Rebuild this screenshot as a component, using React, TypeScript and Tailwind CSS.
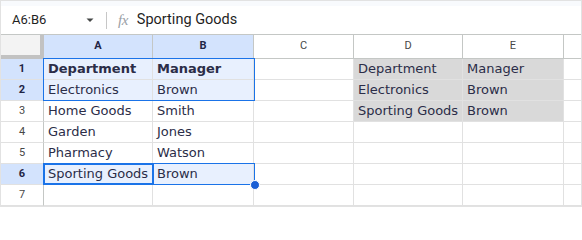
import React from "react";

// ── Data ──────────────────────────────────────────────────────────────────────

type Row = { a: string; b: string; d?: string; e?: string; bold?: boolean };

const rows: Row[] = [
  { a: "Department", b: "Manager", d: "Department", e: "Manager", bold: true },
  { a: "Electronics", b: "Brown", d: "Electronics", e: "Brown" },
  { a: "Home Goods", b: "Smith", d: "Sporting Goods", e: "Brown" },
  { a: "Garden", b: "Jones" },
  { a: "Pharmacy", b: "Watson" },
  { a: "Sporting Goods", b: "Brown" },
  { a: "", b: "" },
];

const selectedRows = [1, 2, 6];
const rangeRows = [1, 2, 6];

const cellFont = { fontFamily: '"DejaVu Sans", Verdana, sans-serif' };
const uiFont = { fontFamily: 'Roboto, "Liberation Sans", Arial, sans-serif' };

// ── Cells ─────────────────────────────────────────────────────────────────────

function ColHeader({ label, active }: { label: string; active?: boolean }) {
  return (
    <div
      className={`h-[24px] flex items-center justify-center border-r border-b border-[#c4c7c5] text-[11px] ${
        active ? "bg-[#d3e3fd] font-bold text-[#1f2545]" : "bg-white text-[#474747]"
      }`}
      style={uiFont}
    >
      {label}
    </div>
  );
}

function RowHeader({ n }: { n: number }) {
  const active = selectedRows.includes(n);
  return (
    <div
      className={`h-[21px] flex items-center justify-center border-r border-b border-r-[#c4c7c5] border-b-[#e1e1e1] text-[11px] ${
        active ? "bg-[#d3e3fd] font-bold text-[#1f2545]" : "bg-white text-[#474747]"
      }`}
      style={uiFont}
    >
      {n}
    </div>
  );
}

function Cell({
  text,
  bold,
  fill,
}: {
  text?: string;
  bold?: boolean;
  fill?: "sel" | "gray";
}) {
  const bg =
    fill === "sel" ? "bg-[#e8f0fe]" : fill === "gray" ? "bg-[#d9d9d9]" : "bg-white";
  return (
    <div
      className={`h-[21px] flex items-center px-[4px] border-r border-b border-[#e1e1e1] whitespace-nowrap overflow-hidden text-[13px] text-[#2b2d48] ${bg} ${
        bold ? "font-bold" : ""
      }`}
      style={cellFont}
    >
      {text}
    </div>
  );
}

// ── Toolbar ───────────────────────────────────────────────────────────────────

function FormulaBar() {
  return (
    <div
      className="h-[29px] flex items-center border-b border-[#c4c7c5] bg-white"
      style={uiFont}
    >
      <div className="w-[80px] pl-[11px] text-[13px] text-[#1f1f1f]">A6:B6</div>
      <svg width="10" height="6" viewBox="0 0 10 6" className="ml-[4px]">
        <path d="M1.5 1.5h7L5 5z" fill="#444746" />
      </svg>
      <div className="ml-[11px] w-px h-[17px] bg-[#c7c7c7]" />
      <span
        className="ml-[11px] text-[15px] italic text-[#9aa0a6] tracking-[-0.5px]"
        style={{ fontFamily: '"Liberation Serif", "Times New Roman", serif' }}
      >
        fx
      </span>
      <span className="ml-[9px] text-[14.5px] text-[#1f1f1f]">Sporting Goods</span>
    </div>
  );
}

// ── App ───────────────────────────────────────────────────────────────────────

export default function App() {
  return (
    <div className="w-[582px] h-[207px] overflow-hidden bg-white border border-[#e2e2e2]">
      <div className="h-[5px] bg-[#f8fafd]" />
      <FormulaBar />
      <div className="relative grid grid-cols-[43px_109px_101px_100px_109px_101px_1fr]">
        {/* header row */}
        <div className="h-[24px] bg-[#f3f3f3] border-r-4 border-b-4 border-[#c2c2c2]" />
        <ColHeader label="A" active />
        <ColHeader label="B" active />
        <ColHeader label="C" />
        <ColHeader label="D" />
        <ColHeader label="E" />
        <div className="h-[24px] border-b border-[#c4c7c5]" />

        {rows.map((r, i) => {
          const n = i + 1;
          const sel = rangeRows.includes(n) ? "sel" : undefined;
          const gray = r.d !== undefined ? "gray" : undefined;
          return (
            <React.Fragment key={n}>
              <RowHeader n={n} />
              <Cell text={r.a} bold={r.bold} fill={sel} />
              <Cell text={r.b} bold={r.bold} fill={sel} />
              <Cell />
              <Cell text={r.d} fill={gray} />
              <Cell text={r.e} fill={gray} />
              <div className="h-[21px] border-b border-[#e1e1e1]" />
            </React.Fragment>
          );
        })}

        {/* range A1:B2 */}
        <div className="absolute left-[42px] top-[23px] w-[212px] h-[43px] border border-[#1a73e8] pointer-events-none" />
        {/* range A6:B6 */}
        <div className="absolute left-[42px] top-[128px] w-[212px] h-[22px] border border-[#1a73e8] pointer-events-none" />
        {/* active cell A6 */}
        <div className="absolute left-[42px] top-[128px] w-[111px] h-[22px] border-2 border-[#1a73e8] pointer-events-none" />
        {/* fill handle */}
        <div className="absolute left-[249px] top-[145px] w-[8px] h-[8px] rounded-full bg-[#1a5fd6] border border-white box-content" />
      </div>
    </div>
  );
}
